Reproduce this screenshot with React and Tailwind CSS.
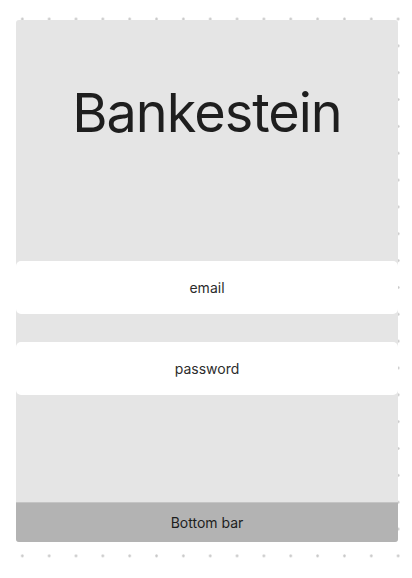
export default function App() {
  return (
    <div
      className="relative w-[412px] h-[578px] overflow-hidden bg-white bg-[radial-gradient(circle,#c9c9c9_1px,transparent_1.6px)] bg-[length:26.85px_26.85px] bg-[position:8.9px_5.6px] pt-[20px] pl-[16px]"
      style={{ fontFamily: "Inter, 'Noto Sans', sans-serif" }}
    >
      {/* ── Card ── */}
      <div className="w-[382px] h-[522px] flex flex-col bg-[#e5e5e5] rounded-[3px]">
        <div className="h-[241px] pt-[66px] text-center">
          <h1 className="text-[54px] leading-[54px] font-normal tracking-[-1px] text-[#1e1e1e]">
            Bankestein
          </h1>
        </div>

        <div className="h-[53px] flex items-center justify-center bg-white rounded-[5px] text-[14px] text-[#2c2c2c]">
          email
        </div>
        <div className="h-[28px]" />
        <div className="h-[53px] flex items-center justify-center bg-white rounded-[5px] text-[14px] text-[#2c2c2c]">
          password
        </div>

        <div className="flex-1" />

        <div className="h-[40px] flex items-center justify-center bg-[#b3b3b3] border-t border-[#c4c4c4] rounded-b-[3px] text-[14px] text-[#1e1e1e]">
          Bottom bar
        </div>
      </div>
    </div>
  )
}
